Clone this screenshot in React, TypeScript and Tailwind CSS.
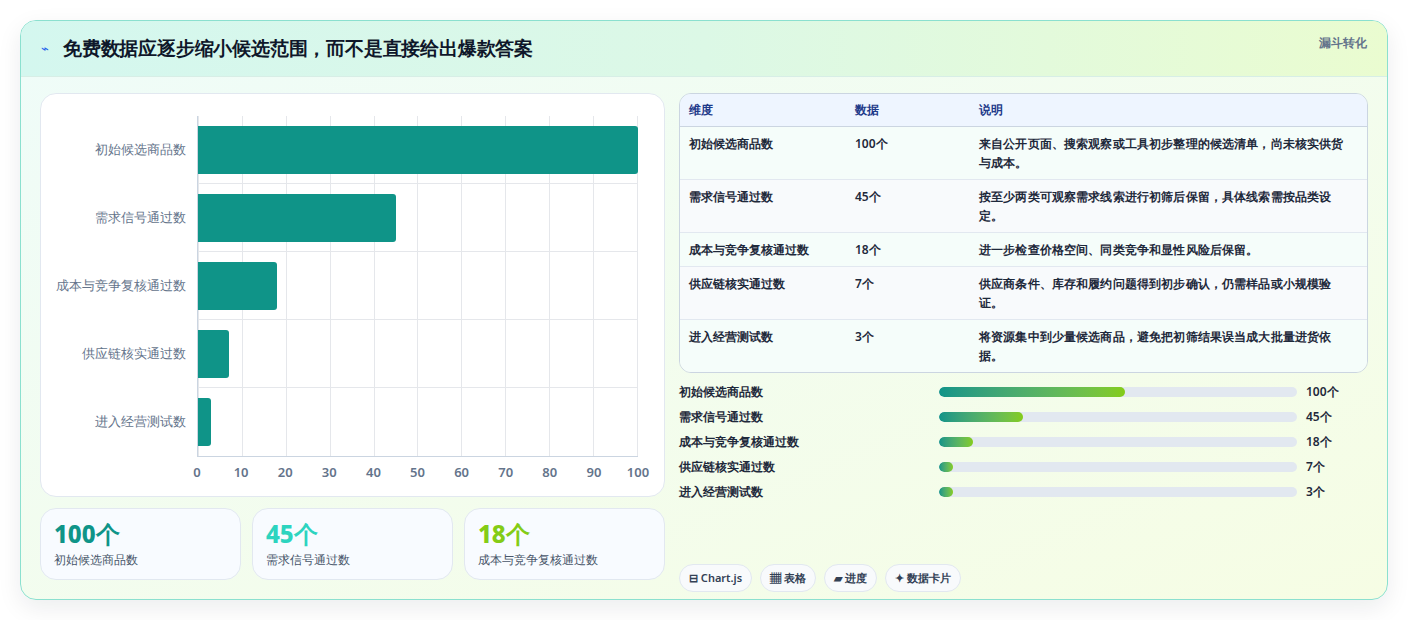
const rows = [
  { name: "初始候选商品数", v: 100, note: "来自公开页面、搜索观察或工具初步整理的候选清单，尚未核实供货与成本。" },
  { name: "需求信号通过数", v: 45, note: "按至少两类可观察需求线索进行初筛后保留，具体线索需按品类设定。" },
  { name: "成本与竞争复核通过数", v: 18, note: "进一步检查价格空间、同类竞争和显性风险后保留。" },
  { name: "供应链核实通过数", v: 7, note: "供应商条件、库存和履约问题得到初步确认，仍需样品或小规模验证。" },
  { name: "进入经营测试数", v: 3, note: "将资源集中到少量候选商品，避免把初筛结果误当成大批量进货依据。" },
];

const ticks = [0, 10, 20, 30, 40, 50, 60, 70, 80, 90, 100];

function Chart() {
  return (
    <div className="h-[404px] rounded-2xl border border-[#e2e8f0] bg-white pt-[22px] pl-[12px] pr-[26px]">
      <div className="flex">
        <div className="w-[144px] flex flex-col">
          {rows.map((r) => (
            <div key={r.name} className="h-[68px] flex items-center justify-end pr-[11px] text-[13px] text-[#64748b]">
              {r.name}
            </div>
          ))}
        </div>
        <div className="relative flex-1 border-l border-[#cbd5e1]">
          <div className="absolute inset-0 flex justify-between pointer-events-none">
            {ticks.map((t) => (
              <div key={t} className="w-px bg-[#e5e7eb]" />
            ))}
          </div>
          <div className="relative flex flex-col">
            {rows.map((r, i) => (
              <div key={r.name} className={`h-[68px] flex items-center ${i < 4 ? "border-b border-[#e5e7eb]" : ""}`}>
                <div className="h-[48px] bg-[#0f9488] rounded-r-[3px]" style={{ width: `${r.v}%` }} />
              </div>
            ))}
          </div>
        </div>
      </div>
      <div className="ml-[144px] relative h-[28px] border-t border-[#cbd5e1]">
        {ticks.map((t) => (
          <span key={t} className="absolute top-[6px] -translate-x-1/2 text-[13px] font-semibold text-[#64748b]" style={{ left: `${t}%` }}>
            {t}
          </span>
        ))}
      </div>
    </div>
  );
}

function Stat({ value, label, color }: { value: string; label: string; color: string }) {
  return (
    <div className="flex-1 h-[72px] rounded-2xl border border-[#e2e8f0] bg-[#f8fbff] px-[13px] pt-[11px]">
      <div className={`text-[24px] leading-[28px] font-extrabold ${color}`}>{value}</div>
      <div className="text-[12px] text-[#475569] mt-[3px]">{label}</div>
    </div>
  );
}

export default function App() {
  return (
    <div className="w-[1408px] h-[620px] bg-white p-[20px] font-['Noto_Sans_CJK_SC','Noto_Sans',sans-serif]">
      <div className="h-[580px] rounded-2xl border border-[#8be0cf] bg-gradient-to-br from-[#effcf9] to-[#f6fde4] shadow-[0_8px_24px_rgba(15,23,42,0.08)] overflow-hidden">
        <div className="h-[56px] flex items-center justify-between px-[20px] bg-gradient-to-r from-[#d4f7ef] via-[#dcf8e6] to-[#eafcd0] border-b border-[#d7eee6]">
          <div className="flex items-center gap-[8px]">
            <span className="text-[13px] text-[#2563eb] w-[14px]">⌁</span>
            <span className="text-[19px] font-black tracking-[-0.2px] text-[#0f172a]">免费数据应逐步缩小候选范围，而不是直接给出爆款答案</span>
          </div>
          <span className="text-[12px] font-bold text-[#64748b] -mt-[12px]">漏斗转化</span>
        </div>
        <div className="flex gap-[14px] px-[19px] pt-[16px]">
          <div className="w-[625px] flex flex-col gap-[11px]">
            <Chart />
            <div className="flex gap-[11px]">
              <Stat value="100个" label="初始候选商品数" color="text-[#0f9488]" />
              <Stat value="45个" label="需求信号通过数" color="text-[#2dd4bf]" />
              <Stat value="18个" label="成本与竞争复核通过数" color="text-[#84cc16]" />
            </div>
          </div>
          <div className="flex-1 flex flex-col">
            <div className="rounded-xl border border-[#cbd5e1] overflow-hidden text-[12px] font-semibold text-[#1e293b]">
              <div className="flex h-[33px] items-center bg-[#eef5ff] border-b border-[#cbd5e1] text-[#1e3a8a]">
                <div className="w-[175px] pl-[9px]">维度</div>
                <div className="w-[124px]">数据</div>
                <div className="flex-1">说明</div>
              </div>
              {rows.map((r, i) => (
                <div key={r.name} className={`flex py-[7px] ${i % 2 ? "bg-[#f8fafc]" : "bg-[#f5fdfa]"} ${i < 4 ? "border-b border-[#e2e8f0]" : ""}`}>
                  <div className="w-[175px] pl-[9px] leading-[19px]">{r.name}</div>
                  <div className="w-[124px] leading-[19px]">{r.v}个</div>
                  <div className="flex-1 pr-[16px] leading-[19px] tracking-[0.15px]">{r.note}</div>
                </div>
              ))}
            </div>
            <div className="mt-[10px] flex flex-col gap-[7px]">
              {rows.map((r) => (
                <div key={r.name} className="flex items-center h-[18px] text-[12px] font-semibold text-[#1e293b]">
                  <div className="w-[260px]">{r.name}</div>
                  <div className="w-[358px] h-[10px] rounded-full bg-[#e2e8f0] overflow-hidden">
                    <div className="h-full rounded-full bg-gradient-to-r from-[#0f9488] to-[#84cc16]" style={{ width: `${Math.max(r.v * 0.52, 4)}%` }} />
                  </div>
                  <div className="pl-[9px]">{r.v}个</div>
                </div>
              ))}
            </div>
            <div className="mt-[63px] flex gap-[8px] text-[11px] font-semibold text-[#334155]">
              {["⊟ Chart.js", "▦ 表格", "▰ 进度", "✦ 数据卡片"].map((c) => (
                <span key={c} className="h-[28px] px-[9px] flex items-center rounded-full border border-[#e2e8f0] bg-[#f8fafc]">{c}</span>
              ))}
            </div>
            <p className="mt-[11px] pr-[20px] text-[13px] leading-[19px] text-[#475569]">
              漏斗展示的是决策收窄过程。候选数量为示意值，关键不是固定淘汰比例，而是每一步都有明确的通过条件和可追溯证据。
            </p>
          </div>
        </div>
      </div>
    </div>
  );
}
